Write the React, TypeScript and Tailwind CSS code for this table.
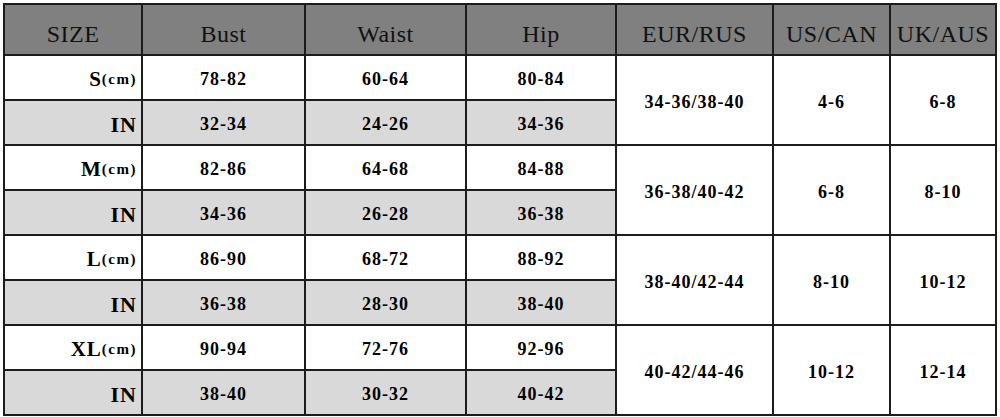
const headers = ["SIZE", "Bust", "Waist", "Hip", "EUR/RUS", "US/CAN", "UK/AUS"];

const sizes = [
  { size: "S", cm: ["78-82", "60-64", "80-84"], inch: ["32-34", "24-26", "34-36"], eur: "34-36/38-40", us: "4-6", uk: "6-8" },
  { size: "M", cm: ["82-86", "64-68", "84-88"], inch: ["34-36", "26-28", "36-38"], eur: "36-38/40-42", us: "6-8", uk: "8-10" },
  { size: "L", cm: ["86-90", "68-72", "88-92"], inch: ["36-38", "28-30", "38-40"], eur: "38-40/42-44", us: "8-10", uk: "10-12" },
  { size: "XL", cm: ["90-94", "72-76", "92-96"], inch: ["38-40", "30-32", "40-42"], eur: "40-42/44-46", us: "10-12", uk: "12-14" },
];

const cell = "flex items-center justify-center pt-1 text-[18px] font-bold tracking-[1px] text-black";

export default function App() {
  return (
    <div className="h-[417px] w-[1000px] overflow-hidden bg-white pl-[3px] pt-[3px] font-['Liberation_Serif','Times_New_Roman',serif]">
      <div className="grid w-[994px] grid-cols-[136px_161px_159px_148px_155px_115px_104px] grid-rows-[49px_repeat(8,43px)] gap-[2px] bg-[#1c1c1c] p-[2px]">
        {headers.map((h) => (
          <div key={h} className="flex items-center justify-center bg-[#808080] pt-2 text-[24px] tracking-[0.5px] text-[#111]">
            {h}
          </div>
        ))}
        {sizes.map((s) => [
          <div key={s.size + "c"} className="flex items-center justify-end bg-white pr-[4px] pt-1 font-bold text-black">
            <span className="text-[21px] tracking-[1px]">{s.size}</span>
            <span className="text-[15px] tracking-[1.5px]">(cm)</span>
          </div>,
          ...s.cm.map((v, j) => (
            <div key={s.size + "cm" + j} className={`${cell} bg-white`}>
              {v}
            </div>
          )),
          ...[s.eur, s.us, s.uk].map((v, j) => (
            <div key={s.size + "m" + j} className={`${cell} row-span-2 bg-white`}>
              {v}
            </div>
          )),
          <div key={s.size + "i"} className="flex items-center justify-end bg-[#d9d9d9] pr-[4px] pt-1 text-[22px] font-bold tracking-[1px] text-black">
            IN
          </div>,
          ...s.inch.map((v, j) => (
            <div key={s.size + "in" + j} className={`${cell} bg-[#d9d9d9]`}>
              {v}
            </div>
          )),
        ])}
      </div>
    </div>
  );
}
